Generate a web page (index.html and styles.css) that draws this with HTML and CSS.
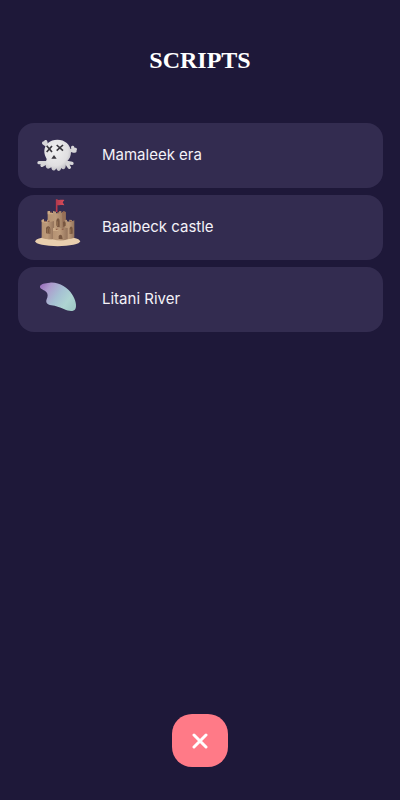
FILE: index.html
```html
<!DOCTYPE html>
<html lang="en">
<head>
<meta charset="utf-8">
<meta name="viewport" content="width=device-width, initial-scale=1">
<title>Scripts</title>
<link rel="stylesheet" href="styles.css">
</head>
<body>
<main class="screen">
  <h1 class="title">SCRIPTS</h1>
  <ul class="list">
    <li>
      <button class="card" type="button">
        <svg class="icon" viewBox="0 0 180 195" aria-hidden="true">
          <defs>
            <radialGradient id="skull" cx=".4" cy=".35" r=".75">
              <stop offset="0" stop-color="#f0f0f0"/><stop offset=".65" stop-color="#e0dfe1"/><stop offset="1" stop-color="#b2b0b8"/>
            </radialGradient>
          </defs>
          <g transform="translate(0 21)">
            <g stroke="#d6d5d8" stroke-width="10" stroke-linecap="round" fill="none">
              <path d="M47 39L66 52M53 35L55 43M120 64L142 58M134 52L137 63L141 63M33 98L56 98M42 106L58 96M106 95L132 100M114 97L124 112"/>
            </g>
            <path fill="url(#skull)" d="M88 29C66 29 51 43 49 61C48 72 52 80 56 87L53 103C52 114 58 119 66 114L70 112C71 124 80 125 85 115C88 126 97 125 100 114C105 121 112 118 113 109L115 96C125 87 129 78 129 66C128 43 110 29 88 29Z"/>
            <path d="M56 47L72 66M72 48L56 66M86 45L105 62M105 45L86 62" stroke="#38363c" stroke-width="5" fill="none"/>
            <path d="M78 75L86 86H70Z" fill="#38363c"/>
          </g>
        </svg>
        <span class="name">Mamaleek era</span>
      </button>
    </li>
    <li>
      <button class="card" type="button">
        <svg class="icon" viewBox="0 0 180 195" aria-hidden="true">
          <defs>
            <linearGradient id="sand" x1="0" x2="1">
              <stop offset="0" stop-color="#b59272"/><stop offset=".45" stop-color="#bd9b7b"/><stop offset="1" stop-color="#94735b"/>
            </linearGradient>
            <linearGradient id="flag" x1="0" x2="1">
              <stop offset="0" stop-color="#b33a4e"/><stop offset="1" stop-color="#dc4c59"/>
            </linearGradient>
          </defs>
          <ellipse cx="89" cy="139" rx="67" ry="15" fill="#e9cfae"/>
          <path d="M86 13V51" stroke="#b8394b" stroke-width="5"/>
          <path d="M85 13C92 17 98 13 109 15L104 22L109 31C98 29 93 32 85 29Z" fill="url(#flag)"/>
          <path fill="url(#sand)" d="M59 49L66 48V53L75 54V48L84 50V55L93 54V49L100 48V54L108 49L113 52V133H59Z"/>
          <path fill="#967058" d="M102 52L113 50V92L104 98Z"/>
          <path fill="url(#sand)" d="M41 75L48 73V78L57 80V74L66 76V81L78 78V132Q58 135 41 129Z"/>
          <path fill="url(#sand)" d="M110 76L117 74V79L124 80V74L132 75V79L139 76V128Q124 135 109 131Z"/>
          <path fill="url(#sand)" d="M75 99L82 98V103L91 104V99L101 99V104L111 102V98L119 99V133Q97 140 75 133Z"/>
          <path fill="#cbaa87" d="M59 49L66 48V53L75 54V58H59ZM41 75L48 73V78L57 80V84L41 81ZM75 99L82 98V103L91 104V108H75Z"/>
          <path fill="#775640" d="M85 91V77Q86 70 91 70Q95 72 95 78V96H88ZM54 115V99Q56 93 62 94Q67 96 67 102V116ZM125 117V100Q127 93 131 95Q135 97 134 104V116ZM92 132V123Q97 116 102 122L104 132ZM105 82Q111 75 113 84V92L106 96Z"/>
          <path d="M58 115V102Q61 97 64 101V116M88 93V79M128 116V103" stroke="#947051" stroke-width="3" fill="none"/>
          <path d="M69 50V54M91 51V55M107 49V54M51 77V81M62 77V81M128 77V81M86 101V105M104 101V105" stroke="#95644c" stroke-width="5"/>
        </svg>
        <span class="name">Baalbeck castle</span>
      </button>
    </li>
    <li>
      <button class="card" type="button">
        <svg class="icon" viewBox="0 0 180 195" aria-hidden="true">
          <defs>
            <linearGradient id="river" x1="0" y1=".15" x2="1" y2=".7">
              <stop offset="0" stop-color="#9b72bd"/><stop offset=".2" stop-color="#ad9bcd"/><stop offset=".52" stop-color="#a6c1d3"/><stop offset=".8" stop-color="#aed5d2"/><stop offset="1" stop-color="#a2cbc8"/>
            </linearGradient>
          </defs>
          <path transform="translate(0 15)" fill="url(#river)" d="M36 43C38 36 51 33 65 32C91 29 119 45 133 68C143 84 147 101 142 111C137 120 122 118 109 112C94 105 84 102 70 100C58 99 52 91 56 82C60 73 60 66 55 60C49 53 34 52 36 43Z"/>
        </svg>
        <span class="name">Litani River</span>
      </button>
    </li>
  </ul>
  <button class="close" type="button" aria-label="Close">
    <svg class="cross" viewBox="0 0 16 16" aria-hidden="true"><path d="M2 2L14 14M14 2L2 14"/></svg>
  </button>
</main>
</body>
</html>
```
FILE: styles.css
```css
* {
  box-sizing: border-box;
}

body {
  margin: 0;
  background: #1e1839;
  color: #f4f2f8;
  font-family: Inter, "Liberation Sans", sans-serif;
}

.screen {
  display: flex;
  flex-direction: column;
  min-height: 100vh;
  padding: 40px 0 33px;
}

.title {
  margin: 0 0 43px;
  color: #fff;
  font-family: "Liberation Serif", serif;
  font-size: 24px;
  font-weight: 700;
  line-height: 40px;
  text-align: center;
}

.list {
  display: grid;
  gap: 7px;
  margin: 0;
  padding: 0 17px 0 18px;
  list-style: none;
}

.card {
  display: flex;
  align-items: center;
  gap: 14px;
  width: 100%;
  height: 65px;
  padding: 0 10px;
  border: 0;
  border-radius: 16px;
  background: #332c50;
  color: inherit;
  font: inherit;
  font-size: 15px;
  line-height: 20px;
  text-align: left;
}

.name {
  padding-bottom: 2px;
}

.icon {
  flex: none;
  width: 60px;
  height: 65px;
}

.close {
  display: grid;
  place-items: center;
  width: 56px;
  height: 53px;
  margin: auto auto 0;
  padding: 0;
  border: 0;
  border-radius: 20px;
  background: #ff7a87;
}

.cross {
  width: 16px;
  height: 16px;
  fill: none;
  stroke: #fff;
  stroke-width: 3;
  stroke-linecap: round;
}
```
